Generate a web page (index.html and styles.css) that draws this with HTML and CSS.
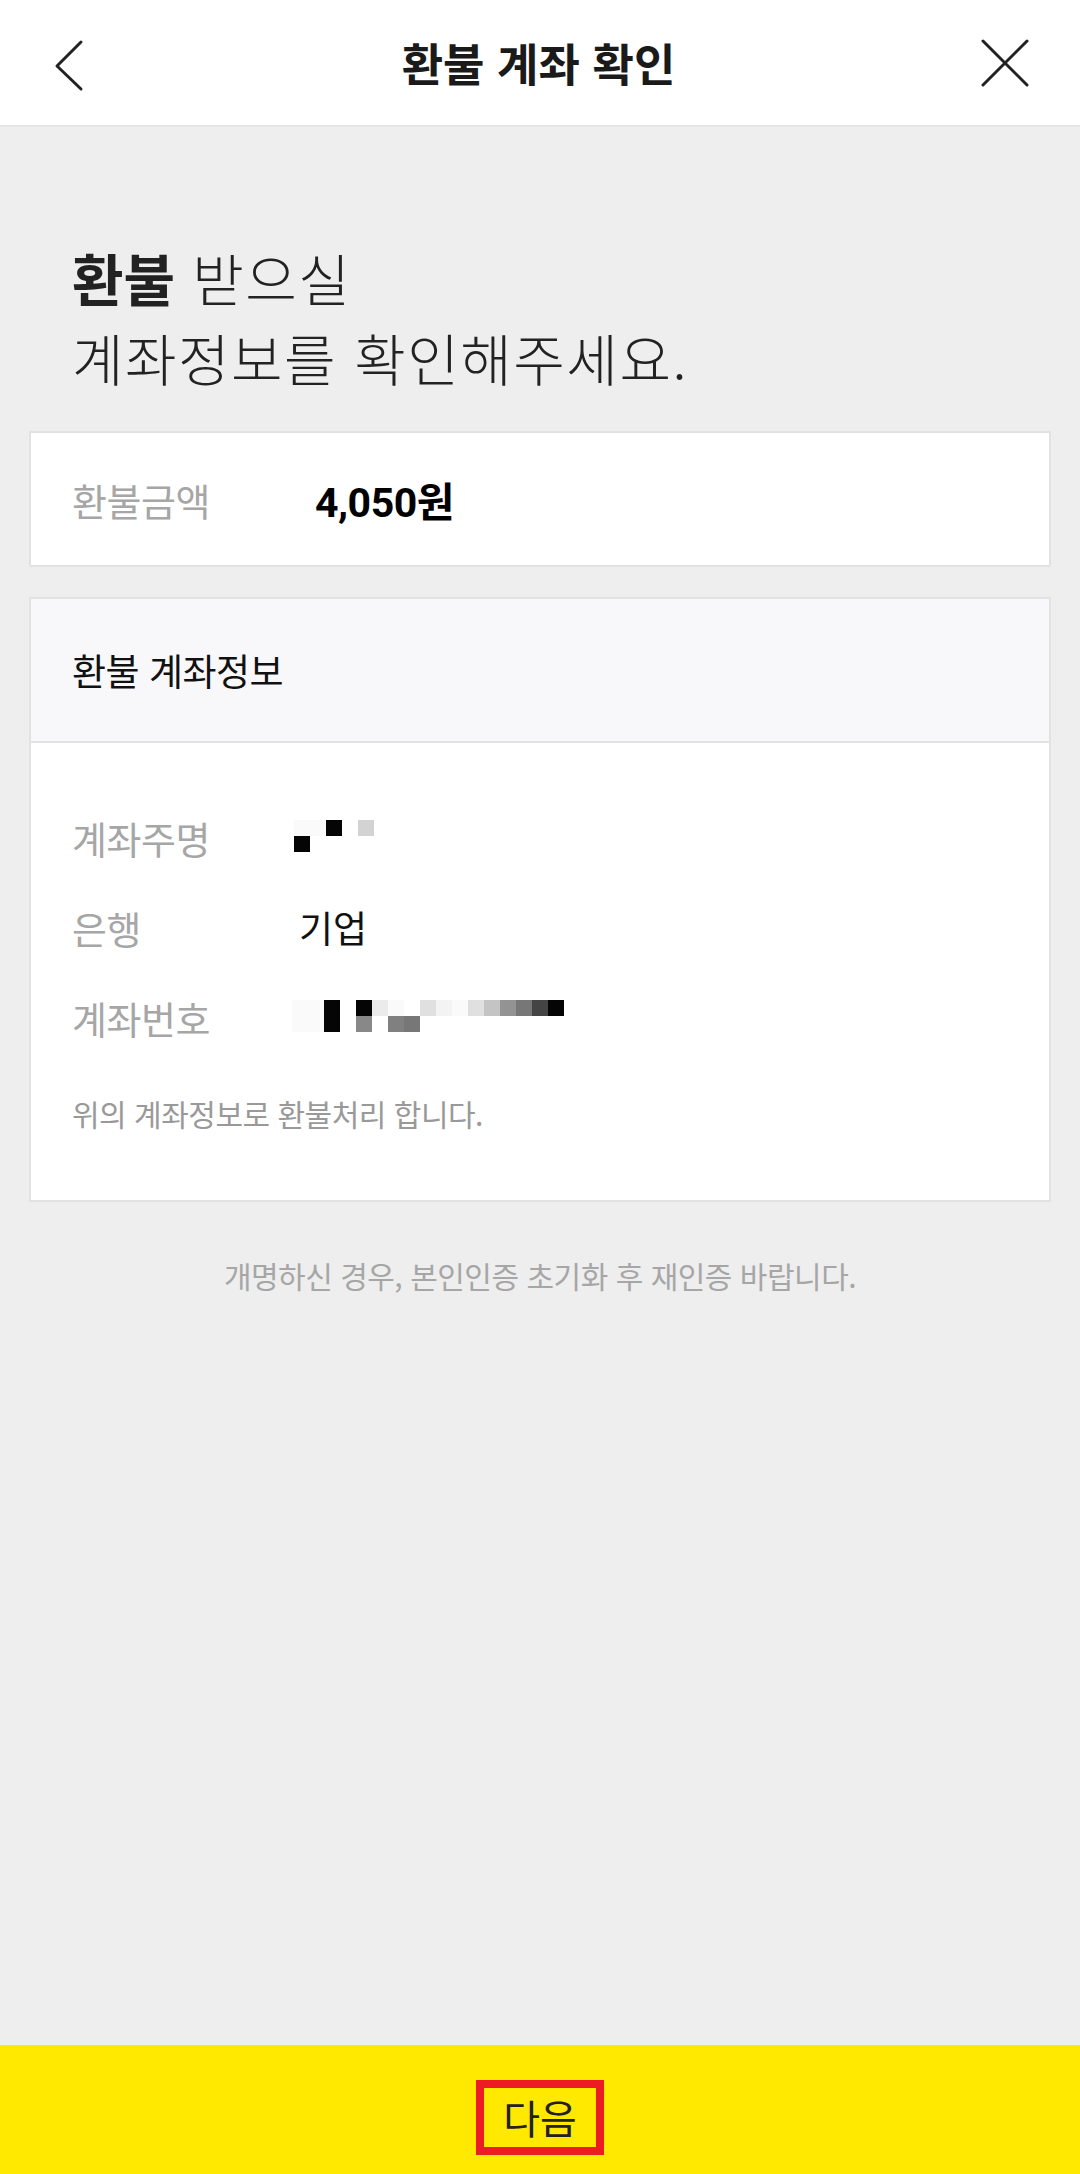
FILE: index.html
```html
<!DOCTYPE html>
<html lang="ko">
<head>
<meta charset="utf-8">
<title>환불 계좌 확인</title>
<link rel="stylesheet" href="styles.css">
</head>
<body>
<div class="page">
  <header class="topbar">
    <button class="icon-btn back" aria-label="뒤로">
      <svg width="40" height="60" viewBox="0 0 40 60"><polyline points="28,8 4,32 28,55" fill="none" stroke="#222" stroke-width="3" stroke-linecap="round" stroke-linejoin="round"/></svg>
    </button>
    <h1 class="title">환불 계좌 확인</h1>
    <button class="icon-btn close" aria-label="닫기">
      <svg width="50" height="50" viewBox="0 0 50 50"><path d="M3 3 L47 47 M47 3 L3 47" fill="none" stroke="#222" stroke-width="3" stroke-linecap="round"/></svg>
    </button>
  </header>

  <main class="content">
    <h2 class="headline"><strong>환불</strong> 받으실<br>계좌정보를 확인해주세요.</h2>

    <section class="card amount-card">
      <span class="label">환불금액</span>
      <span class="amount">4,050원</span>
    </section>

    <section class="card account-card">
      <div class="card-head">환불 계좌정보</div>
      <div class="card-body">
        <div class="row">
          <span class="label">계좌주명</span>
          <span class="pixels name-pixels">
            <i class="c1"></i><i class="c1"></i><i class="ck"></i><i></i><i class="c5"></i>
            <i class="ck"></i><i></i><i></i><i></i><i></i>
          </span>
        </div>
        <div class="row">
          <span class="label">은행</span>
          <span class="value">기업</span>
        </div>
        <div class="row">
          <span class="label">계좌번호</span>
          <span class="pixels acct-pixels">
            <i class="c1"></i><i class="c1"></i><i class="ck"></i><i></i><i class="ck"></i><i class="c3"></i><i class="c1"></i><i></i><i class="c4"></i><i class="c2"></i><i class="c1"></i><i class="c4"></i><i class="c6"></i><i class="c7"></i><i class="c8"></i><i class="c9"></i><i class="ck"></i>
            <i class="c1"></i><i class="c1"></i><i class="ck"></i><i></i><i class="c7b"></i><i></i><i class="c8b"></i><i class="c8"></i><i></i><i></i><i></i><i></i><i></i><i></i><i></i><i></i><i></i>
          </span>
        </div>
        <p class="card-note">위의 계좌정보로 환불처리 합니다.</p>
      </div>
    </section>

    <p class="notice">개명하신 경우, 본인인증 초기화 후 재인증 바랍니다.</p>
  </main>

  <footer class="bottom-bar">
    <span class="next">다음</span>
  </footer>
</div>
</body>
</html>
```

FILE: styles.css
```css
* { box-sizing: border-box; }
html, body { margin: 0; padding: 0; }
body {
  background: #eeeeee;
  font-family: "Noto Sans CJK KR", "Noto Sans", sans-serif;
  color: #222;
}
.page {
  min-height: 2174px;
  display: flex;
  flex-direction: column;
}
.topbar {
  height: 127px;
  background: #fff;
  border-bottom: 2px solid #e6e6e6;
  display: flex;
  align-items: center;
  justify-content: space-between;
  padding: 0 50px 0 53px;
}
.icon-btn {
  background: none;
  border: 0;
  padding: 0;
  display: flex;
  align-items: center;
}
.back svg { margin-top: 2px; }
.title {
  margin: 0 0 0 4px;
  font-size: 45px;
  font-weight: 700;
  color: #1a1a1a;
}
.content {
  flex: 1;
  display: flex;
  flex-direction: column;
  padding: 0 29px;
}
.headline {
  margin: 110px 0 34px 43px;
  font-size: 56px;
  line-height: 80px;
  font-weight: 300;
  color: #222;
  letter-spacing: 1.5px;
}
.headline strong { font-weight: 700; letter-spacing: 0; }
.card {
  background: #fff;
  border: 2px solid #e2e2e2;
}
.label {
  font-size: 38px;
  color: #a6a6a6;
  letter-spacing: -0.5px;
}
.amount-card {
  height: 136px;
  display: flex;
  align-items: center;
  padding-left: 41px;
}
.amount-card .label { width: 243px; }
.amount {
  font-family: Roboto, "Noto Sans CJK KR", sans-serif;
  font-weight: 700;
  font-size: 41px;
  color: #000;
  letter-spacing: -0.5px;
}
.account-card { margin-top: 30px; }
.card-head {
  height: 144px;
  background: #f8f8fa;
  border-bottom: 2px solid #e2e2e2;
  display: flex;
  align-items: center;
  padding-left: 41px;
  font-size: 37px;
  color: #111;
  letter-spacing: -0.5px;
}
.card-body {
  padding: 49px 41px 67px;
}
.row {
  height: 90px;
  display: flex;
  align-items: center;
}
.row .label { width: 227px; }
.value {
  font-size: 37px;
  color: #111;
}
.pixels {
  display: grid;
  grid-auto-rows: 16px;
}
.pixels i { display: block; background: #fff; }
.name-pixels { grid-template-columns: repeat(5, 16px); margin-left: -5px; margin-top: -2px; }
.acct-pixels { grid-template-columns: repeat(17, 16px); margin-left: -7px; margin-top: -2px; }
.pixels .c1 { background: #fafafa; }
.pixels .c2 { background: #f3f3f3; }
.pixels .c3 { background: #ebebeb; }
.pixels .c4 { background: #e0e0e0; }
.pixels .c5 { background: #d3d3d3; }
.pixels .c6 { background: #c4c4c4; }
.pixels .c7 { background: #939393; }
.pixels .c7b { background: #888; }
.pixels .c8 { background: #777; }
.pixels .c8b { background: #808080; }
.pixels .c9 { background: #444; }
.pixels .ck { background: #050505; }
.card-note {
  margin: 31px 0 0;
  font-size: 30px;
  line-height: 40px;
  color: #999;
  letter-spacing: -0.5px;
}
.notice {
  margin: 53px 0 0;
  text-align: center;
  font-size: 30px;
  line-height: 40px;
  color: #a6a6a6;
  letter-spacing: -0.5px;
}
.bottom-bar {
  height: 129px;
  background: #ffe900;
  display: flex;
  align-items: center;
  justify-content: center;
}
.next {
  width: 128px;
  height: 75px;
  border: 8px solid #ed1c24;
  display: flex;
  align-items: center;
  justify-content: center;
  font-size: 40px;
  color: #222;
  margin-top: 15px;
}
```
